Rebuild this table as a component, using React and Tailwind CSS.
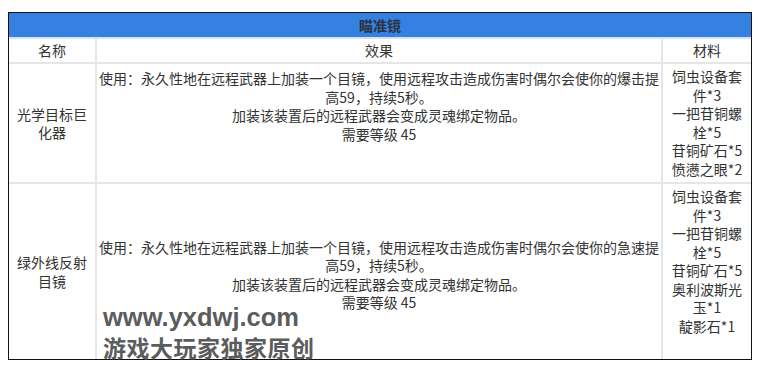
import React from "react";

const font = { fontFamily: '"Noto Sans CJK SC", "Liberation Sans", sans-serif' };

function Effect({ lines }) {
  return (
    <div className="flex flex-col items-center w-full">
      {lines.map((l, i) => (
        <div key={i} className="whitespace-nowrap">{l}</div>
      ))}
    </div>
  );
}

export default function App() {
  const row1Effect = [
    "使用：永久性地在远程武器上加装一个目镜，使用远程攻击造成伤害时偶尔会使你的爆击提",
    "高59，持续5秒。",
    "加装该装置后的远程武器会变成灵魂绑定物品。",
    "需要等级 45",
  ];
  const row2Effect = [
    "使用：永久性地在远程武器上加装一个目镜，使用远程攻击造成伤害时偶尔会使你的急速提",
    "高59，持续5秒。",
    "加装该装置后的远程武器会变成灵魂绑定物品。",
    "需要等级 45",
  ];
  const mat1 = ["饲虫设备套", "件*3", "一把苷铜螺", "栓*5", "苷铜矿石*5", "愤懑之眼*2"];
  const mat2 = ["饲虫设备套", "件*3", "一把苷铜螺", "栓*5", "苷铜矿石*5", "奥利波斯光", "玉*1", "靛影石*1"];

  return (
    <div className="w-[758px] h-[366px] bg-white overflow-hidden relative" style={font}>
      <div className="pt-[12px] pl-[8px]">
        <div className="w-[744px] h-[348px] border border-[#111] flex flex-col text-[14px] leading-[18.5px] text-[#333]">
          <div className="h-[24px] bg-[#3481e2] flex items-center justify-center font-bold text-[#2b3440]">
            瞄准镜
          </div>
          <div className="h-[2px] bg-[#d3e4f7]" />
          <div className="flex-1 grid grid-cols-[86px_564px_88px] grid-rows-[23px_118px_1fr] gap-[2px] bg-[#e6e6e6]">
            <div className="bg-white flex items-center justify-center">名称</div>
            <div className="bg-white flex items-center justify-center">效果</div>
            <div className="bg-white flex items-center justify-center">材料</div>

            <div className="bg-white flex items-center justify-center text-center px-[6px]">
              光学目标巨化器
            </div>
            <div className="bg-white flex items-start justify-center pt-[5px]">
              <Effect lines={row1Effect} />
            </div>
            <div className="bg-white flex flex-col items-center pt-[3px]">
              {mat1.map((m, i) => (
                <div key={i} className="whitespace-nowrap">{m}</div>
              ))}
            </div>

            <div className="bg-white flex items-center justify-center text-center px-[6px]">
              绿外线反射目镜
            </div>
            <div className="bg-white flex items-center justify-center pt-[6px]">
              <Effect lines={row2Effect} />
            </div>
            <div className="bg-white flex flex-col items-center pt-[3px]">
              {mat2.map((m, i) => (
                <div key={i} className="whitespace-nowrap">{m}</div>
              ))}
            </div>
          </div>
        </div>
      </div>

      <div className="absolute left-[103px] top-[302px] text-[#5c5c5c] font-bold pointer-events-none">
        <div
          className="text-[25.5px] leading-[30px]"
          style={{ fontFamily: '"Liberation Sans", Arial, sans-serif' }}
        >
          www.yxdwj.com
        </div>
        <div className="text-[23px] leading-[30px] tracking-[0.5px] whitespace-nowrap">
          游戏大玩家独家原创
        </div>
      </div>
    </div>
  );
}
